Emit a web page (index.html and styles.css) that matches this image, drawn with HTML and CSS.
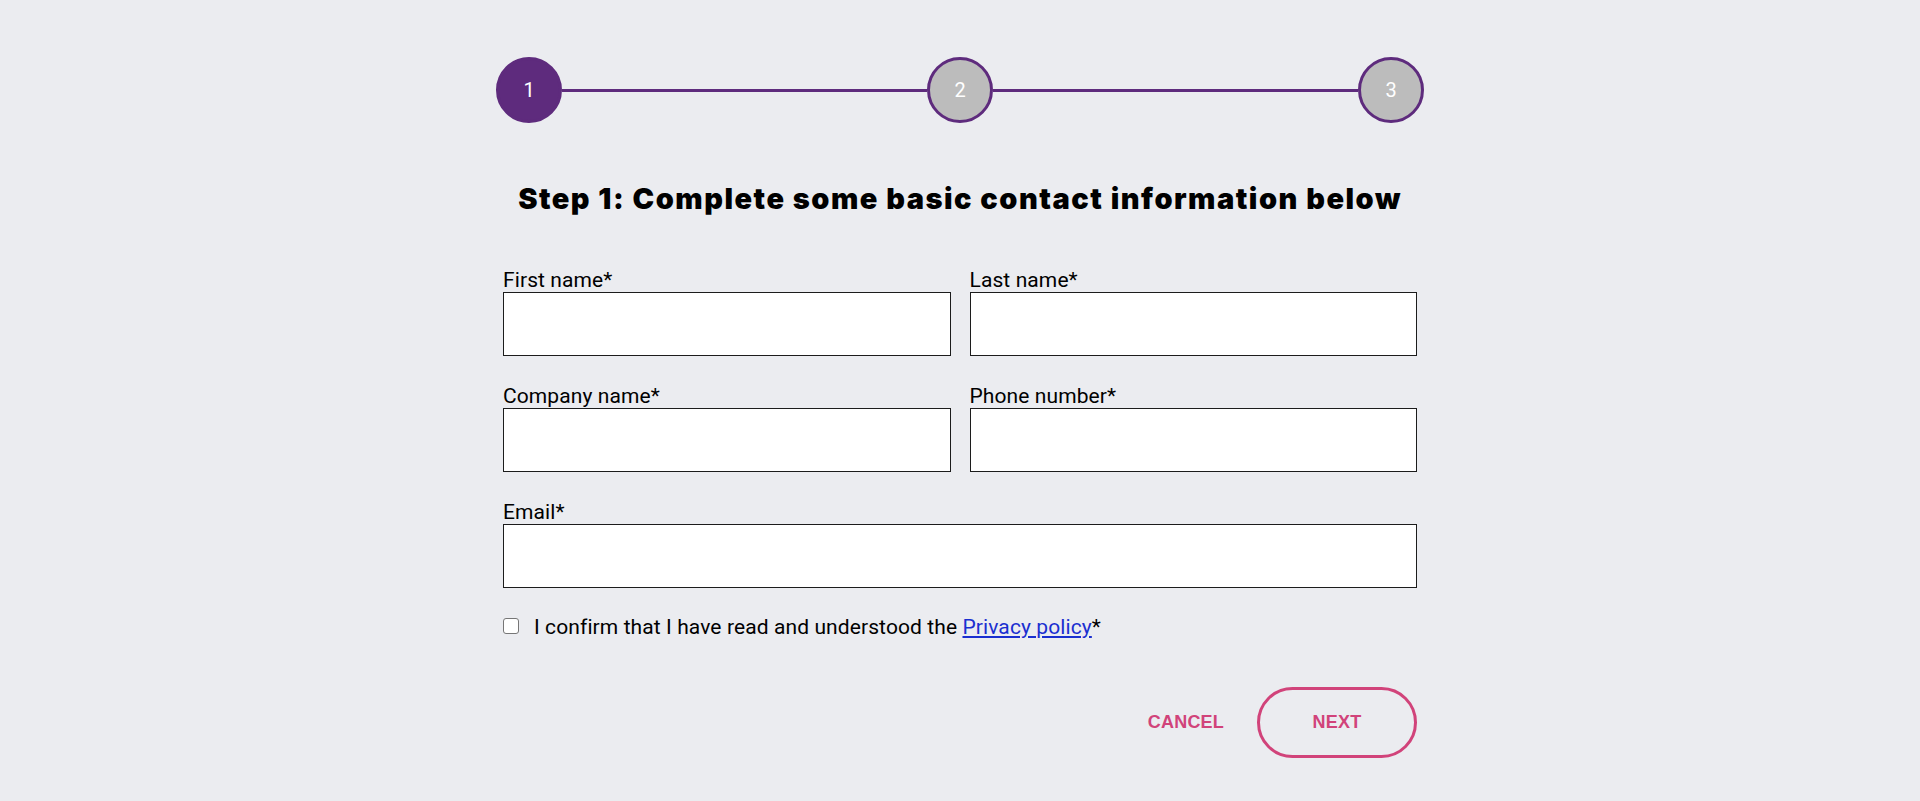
FILE: index.html
```html
<!DOCTYPE html>
<html lang="en">
<head>
<meta charset="utf-8">
<title>Step 1: Contact information</title>
<link rel="stylesheet" href="styles.css">
</head>
<body>
<main class="wizard">
  <ol class="stepper">
    <li class="step step-active">1</li>
    <li class="step-line"></li>
    <li class="step">2</li>
    <li class="step-line"></li>
    <li class="step">3</li>
  </ol>

  <h1 class="title">Step 1: Complete some basic contact information below</h1>

  <form class="form">
    <div class="grid">
      <label class="field">
        <span class="label">First name*</span>
        <input class="input" type="text">
      </label>
      <label class="field">
        <span class="label">Last name*</span>
        <input class="input" type="text">
      </label>
      <label class="field">
        <span class="label">Company name*</span>
        <input class="input" type="text">
      </label>
      <label class="field">
        <span class="label">Phone number*</span>
        <input class="input" type="tel">
      </label>
      <label class="field field-wide">
        <span class="label">Email*</span>
        <input class="input" type="email">
      </label>
    </div>

    <label class="consent">
      <input class="checkbox" type="checkbox">
      <span>I confirm that I have read and understood the <a class="link" href="#">Privacy policy</a>*</span>
    </label>

    <div class="actions">
      <button class="btn btn-text" type="button">CANCEL</button>
      <button class="btn btn-outline" type="button">NEXT</button>
    </div>
  </form>
</main>
</body>
</html>
```

FILE: styles.css
```css
* {
  box-sizing: border-box;
}

html, body {
  margin: 0;
  padding: 0;
  background: #ebecf0;
}

body {
  font-family: Roboto, "Liberation Sans", Arial, sans-serif;
  color: #000;
}

.wizard {
  width: 928px;
  margin: 0 auto;
  padding-top: 57px;
}

.stepper {
  list-style: none;
  margin: 0;
  padding: 0;
  display: flex;
  align-items: center;
}

.step {
  width: 66px;
  height: 66px;
  flex: none;
  border-radius: 50%;
  border: 3px solid #5e2b7d;
  background: #bcbcbc;
  color: #fff;
  font-size: 20px;
  display: flex;
  align-items: center;
  justify-content: center;
}

.step-active {
  background: #5e2b7d;
}

.step-line {
  flex: 1;
  height: 3px;
  background: #5e2b7d;
}

.title {
  margin: 58px 0 0;
  font-family: Inter, "Open Sans", sans-serif;
  font-weight: 900;
  font-size: 29px;
  line-height: 36px;
  letter-spacing: 1.5px;
  text-align: center;
}

.form {
  padding: 0 7px 0 7px;
  margin-top: 51px;
}

.grid {
  display: grid;
  grid-template-columns: 1fr 1fr;
  column-gap: 19px;
  row-gap: 28px;
}

.field {
  display: flex;
  flex-direction: column;
}

.field-wide {
  grid-column: 1 / -1;
}

.label {
  font-size: 21px;
  line-height: 24px;
  letter-spacing: 0.1px;
}

.input {
  height: 64px;
  border: 1px solid #1c1c1c;
  background: #fff;
  border-radius: 0;
  margin: 0;
  padding: 0 12px;
  font-family: inherit;
  font-size: 20px;
}

.consent {
  display: flex;
  align-items: center;
  gap: 15px;
  margin-top: 27px;
  font-size: 21px;
  line-height: 24px;
  letter-spacing: 0.1px;
}

.checkbox {
  appearance: none;
  -webkit-appearance: none;
  width: 16px;
  height: 16px;
  margin: 0 0 3px;
  border: 1px solid #767676;
  border-radius: 3px;
  background: #fff;
  flex: none;
}

.link {
  color: #1a2fd0;
  text-decoration: underline;
}

.actions {
  display: flex;
  justify-content: flex-end;
  align-items: center;
  gap: 33px;
  margin-top: 48px;
}

.btn {
  font-family: "Liberation Sans", Arial, sans-serif;
  font-weight: 700;
  font-size: 18px;
  letter-spacing: 0.2px;
  color: #d1437a;
  background: transparent;
  cursor: pointer;
}

.btn-text {
  border: none;
  padding: 0;
}

.btn-outline {
  width: 160px;
  height: 71px;
  border: 3px solid #d1437a;
  border-radius: 36px;
  padding: 0;
}
```
